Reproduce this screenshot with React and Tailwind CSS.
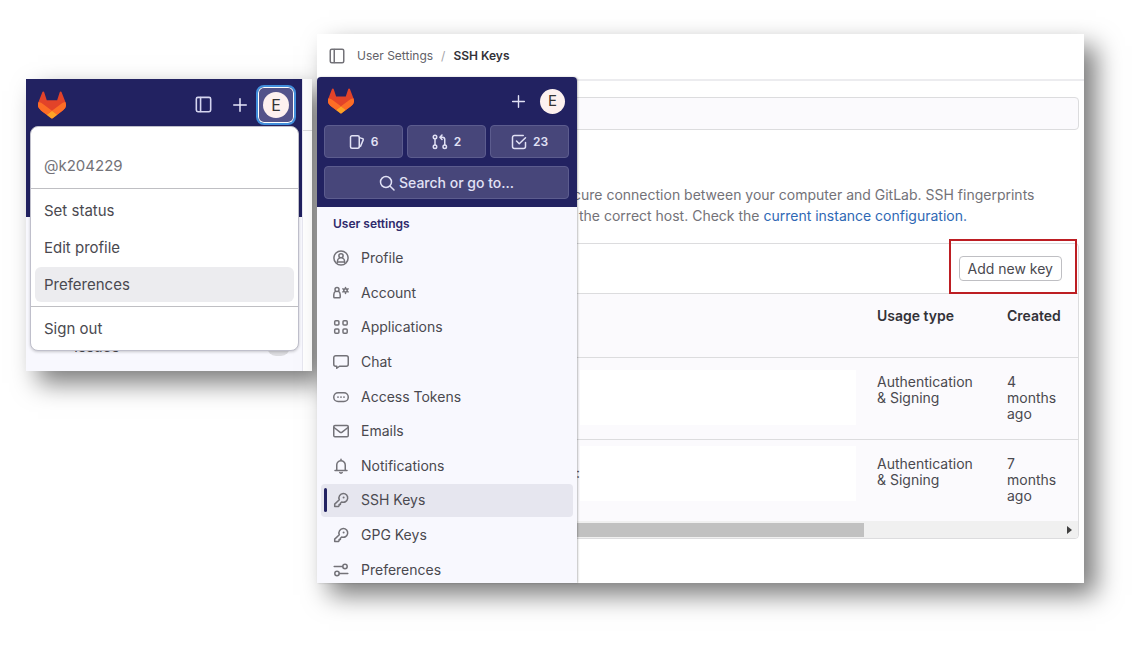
import clsx from 'clsx';

const Icon = ({ children, className }) => (
  <svg
    viewBox="0 0 16 16"
    fill="none"
    stroke="currentColor"
    strokeWidth="1.5"
    strokeLinecap="round"
    strokeLinejoin="round"
    aria-hidden="true"
    className={clsx('shrink-0', className)}
  >
    {children}
  </svg>
);

const icons = {
  sidebar: (
    <>
      <rect x="1.25" y="1.25" width="13.5" height="13.5" rx="1.5" />
      <path d="M5.25 1.5v13" />
    </>
  ),
  plus: <path d="M8 1.75v12.5M1.75 8h12.5" />,
  issues: (
    <>
      <rect x="1.5" y="1.75" width="8.75" height="12.5" rx="1.5" />
      <path d="M10.5 3.6l3 1a1 1 0 0 1 .7 1.3l-2.6 6.2-1.3.9" />
    </>
  ),
  mergeRequest: (
    <>
      <circle cx="3" cy="12.75" r="1.75" />
      <circle cx="3" cy="3" r="1.75" />
      <circle cx="12.75" cy="12.75" r="1.75" />
      <path d="M3 5v5.75M12.75 10.75V5.5a2.25 2.25 0 0 0-2.25-2.25H8.25M10 1L7.9 3.25 10 5.5" />
    </>
  ),
  todo: (
    <>
      <path d="M14.5 8.5v4a2 2 0 0 1-2 2h-9a2 2 0 0 1-2-2v-9a2 2 0 0 1 2-2h8.75" />
      <path d="M5.5 7l2.75 2.75 6.25-6" />
    </>
  ),
  search: (
    <>
      <circle cx="7" cy="7" r="5.5" />
      <path d="M11.2 11.2L15 15" />
    </>
  ),
  profile: (
    <>
      <circle cx="8" cy="8" r="7.1" />
      <circle cx="8" cy="5.75" r="2.1" />
      <path d="M4.4 12.75v-1.6c0-1.6 1-2.7 2.3-3.3M9.3 7.85c1.3.6 2.3 1.7 2.3 3.3v1.6M4.6 12.1h6.8" />
    </>
  ),
  account: (
    <>
      <circle cx="4" cy="4.6" r="2" />
      <path d="M2.4 6.4C1.2 7.2.8 8.4.8 9.8v2.1c0 .5.3.8.8.8h4.8c.5 0 .8-.3.8-.8V9.8c0-1.4-.4-2.6-1.6-3.4" />
      <circle cx="12.5" cy="5.4" r="1.7" />
      <path d="M12.5 2.4v1M12.5 7.4v1M9.9 3.9l.9.5M14.2 6.4l.9.5M9.9 6.9l.9-.5M14.2 4.4l.9-.5" />
    </>
  ),
  applications: (
    <>
      <rect x="1.7" y="1.7" width="4.2" height="4.2" rx="1" />
      <rect x="10" y="1.7" width="4.2" height="4.2" rx="1" />
      <rect x="1.7" y="10" width="4.2" height="4.2" rx="1" />
      <rect x="10" y="10" width="4.2" height="4.2" rx="1" />
    </>
  ),
  chat: (
    <path d="M2.75 1.75h10.5a2 2 0 0 1 2 2v6.5a2 2 0 0 1-2 2H6.5l-2.75 2v-2h-1a2 2 0 0 1-2-2v-6.5a2 2 0 0 1 2-2z" />
  ),
  token: (
    <>
      <rect x=".75" y="3.75" width="14.5" height="8.75" rx="4.3" />
      <path d="M5 8.1v0M8 8.1v0M11 8.1v0" strokeWidth="1.8" />
    </>
  ),
  mail: (
    <>
      <rect x=".75" y="2.5" width="14.5" height="11.25" rx="1.25" />
      <path d="M1 4.5l5.9 4.6a1.8 1.8 0 0 0 2.2 0L15 4.5" />
    </>
  ),
  bell: (
    <>
      <path d="M3.75 12V7a4.25 4.25 0 0 1 8.5 0v5M2 12.5h12M8 1.3v1.2" />
      <path d="M6.8 14.6c.6.7 1.8.7 2.4 0" />
    </>
  ),
  key: (
    <>
      <path d="M10.2 1.5a4.4 4.4 0 1 1-1.5 8.5L7.4 11.2v1.3H6.1v1.3l-.7.8H1.7v-2.5l4.6-4.4a4.4 4.4 0 0 1 3.9-6.2z" />
      <path d="M10.6 5.4v0" strokeWidth="2" />
    </>
  ),
  preferences: (
    <>
      <path d="M1.2 4.5h8.4M6.4 11.5h8.4" />
      <circle cx="12" cy="4.5" r="2.2" />
      <circle cx="4" cy="11.5" r="2.2" />
    </>
  ),
};

const Logo = ({ className }) => (
  <svg viewBox="0 0 25 24" aria-hidden="true" className={className}>
    <path
      fill="#E24329"
      d="m24.507 9.5-.034-.09L21.082.562a.896.896 0 0 0-1.694.091l-2.29 7.01H7.825L5.535.653a.898.898 0 0 0-1.694-.09L.451 9.411.416 9.5a6.297 6.297 0 0 0 2.09 7.278l.012.01.03.022 5.16 3.867 2.56 1.935 1.554 1.176a1.051 1.051 0 0 0 1.268 0l1.555-1.176 2.56-1.935 5.197-3.89.014-.01A6.297 6.297 0 0 0 24.507 9.5Z"
    />
    <path
      fill="#FC6D26"
      d="m24.507 9.5-.034-.09a11.44 11.44 0 0 0-4.56 2.051l-7.447 5.632 4.742 3.584 5.197-3.89.014-.01A6.297 6.297 0 0 0 24.507 9.5Z"
    />
    <path
      fill="#FCA326"
      d="m7.707 20.677 2.56 1.935 1.555 1.176a1.051 1.051 0 0 0 1.268 0l1.555-1.176 2.56-1.935-4.743-3.584-4.755 3.584Z"
    />
    <path
      fill="#FC6D26"
      d="M5.01 11.461a11.43 11.43 0 0 0-4.56-2.05L.416 9.5a6.297 6.297 0 0 0 2.09 7.278l.012.01.03.022 5.16 3.867 4.745-3.584-7.444-5.632Z"
    />
  </svg>
);

const navItems = [
  { label: 'Profile', icon: icons.profile },
  { label: 'Account', icon: icons.account },
  { label: 'Applications', icon: icons.applications },
  { label: 'Chat', icon: icons.chat },
  { label: 'Access Tokens', icon: icons.token },
  { label: 'Emails', icon: icons.mail },
  { label: 'Notifications', icon: icons.bell },
  { label: 'SSH Keys', icon: icons.key, active: true },
  { label: 'GPG Keys', icon: icons.key },
  { label: 'Preferences', icon: icons.preferences },
];

const counters = [
  { name: 'Issues', value: 6, icon: icons.issues },
  { name: 'Merge requests', value: 2, icon: icons.mergeRequest },
  { name: 'To-do items', value: 23, icon: icons.todo },
];

const menuItems = ['Set status', 'Edit profile', 'Preferences'];

const MenuItem = ({ label, active }) => (
  <li className="flex h-[37px] items-center px-1">
    <button
      type="button"
      className={clsx(
        'h-[35px] w-full rounded-md px-[9px] text-left',
        active && 'bg-[#ececef]'
      )}
    >
      {label}
    </button>
  </li>
);

const UserMenuPanel = () => (
  <section className="relative mt-[45px] flex w-[286px] shrink-0 bg-white text-[15px] shadow-[12px_12px_24px_rgba(0,0,0,0.52)]">
    <div className="flex-1 border-r border-[#e7e7f0] bg-[#f8f8fe]">
      <div className="h-[138px] bg-[#222261]">
        <div className="flex h-[51px] items-center pr-1.5 pl-3">
          <Logo className="size-7" />
          <button type="button" aria-label="Collapse sidebar" className="ml-auto text-[#d5d5f0]">
            <Icon className="size-[17px]">{icons.sidebar}</Icon>
          </button>
          <button type="button" aria-label="Create new" className="ml-5 text-[#e6e6fa]">
            <Icon className="size-4">{icons.plus}</Icon>
          </button>
          <button
            type="button"
            aria-label="User menu"
            className="ml-2 flex size-10 items-center justify-center rounded-lg border-2 border-[#428fdc] bg-[#53538a] ring-1 ring-white ring-inset"
          >
            <span className="flex size-[26px] items-center justify-center rounded-full bg-[#fdf1ef] text-base text-[#333]">
              E
            </span>
          </button>
        </div>
      </div>
      <div className="flex h-[154px] items-end justify-between pr-3 pb-[15px] pl-12">
        <span className="h-[18px] leading-[18px]">Issues</span>
        <span className="h-[18px] rounded-full bg-[#dcdce0] px-2 text-xs leading-[18px]">6</span>
      </div>
    </div>
    {/* Strip of the page next to the sidebar */}
    <div className="mt-[51px] w-[9px] border-t border-[#dcdcde]" />

    {/* Dropdown */}
    <div className="absolute top-[47px] left-1 w-[269px] rounded-lg border border-[#bfbfcb] bg-white shadow-[0_1px_3px_rgba(0,0,0,0.2)]">
      <p className="px-[13px] pt-[29px] pb-3 text-[#737278]">@k204229</p>
      <ul className="border-y border-[#bfbfc3] py-[3px]">
        {menuItems.map((label) => (
          <MenuItem key={label} label={label} active={label === 'Preferences'} />
        ))}
      </ul>
      <ul className="py-[3px]">
        <MenuItem label="Sign out" />
      </ul>
    </div>
  </section>
);

const Sidebar = () => (
  <aside className="z-10 w-[260px] shrink-0 overflow-hidden rounded-t bg-[#f8f8fe] shadow-[1px_0_2px_rgba(0,0,0,0.25)]">
    <div className="bg-[#222261] pr-2 pb-2 pl-[7px] text-[#e1e1f5]">
      <div className="flex h-12 items-center px-1">
        <Logo className="size-[26px]" />
        <button type="button" aria-label="Create new" className="ml-auto">
          <Icon className="size-[15px]">{icons.plus}</Icon>
        </button>
        <button
          type="button"
          aria-label="User menu"
          className="ml-3.5 flex size-[25px] items-center justify-center rounded-full bg-[#fdf1ef] text-[15px] text-[#333]"
        >
          E
        </button>
      </div>
      <div className="grid grid-cols-3 gap-1">
        {counters.map(({ name, value, icon }) => (
          <button
            key={name}
            type="button"
            aria-label={`${name} ${value}`}
            className="flex h-[33px] items-center justify-center gap-1.5 rounded border border-[#5c5c8e] bg-[#47467a] text-xs font-semibold"
          >
            <Icon className="size-4">{icon}</Icon>
            {value}
          </button>
        ))}
      </div>
      <button
        type="button"
        className="mt-2 flex h-[33px] w-full items-center justify-center gap-1 rounded border border-[#5c5c8e] bg-[#47467a] font-medium"
      >
        <Icon className="size-4">{icons.search}</Icon>
        Search or go to...
      </button>
    </div>

    <h2 className="flex h-[34px] items-center px-4 text-xs font-semibold text-[#2f2a6b]">
      User settings
    </h2>
    <ul className="-mb-1 grid h-[346px] grid-rows-10">
      {navItems.map(({ label, icon, active }) => (
        <li key={label} className="flex items-center px-1">
          <a
            href="#"
            className={clsx(
              'flex h-[33px] w-full items-center rounded pl-[3px]',
              active && 'bg-[#e6e6ef]'
            )}
          >
            <span className={clsx('mr-1.5 h-6 w-[3px] rounded-full', active && 'bg-[#222261]')} />
            <Icon className="mr-3 size-4 text-[#737278]">{icon}</Icon>
            {label}
          </a>
        </li>
      ))}
    </ul>
  </aside>
);

const KeysTable = () => (
  <table className="w-full table-fixed bg-[#fbfafd] text-left">
    <colgroup>
      <col />
      <col className="w-[130px]" />
      <col className="w-[71px]" />
    </colgroup>
    <thead>
      <tr className="h-[63px] border-b border-[#dcdcde] align-top text-[#333238]">
        <th aria-label="Key" />
        <th className="pt-3 font-semibold">Usage type</th>
        <th className="pt-3 font-semibold">Created</th>
      </tr>
    </thead>
    <tbody className="align-top leading-4">
      <tr className="h-[82px] border-b border-[#dcdcde]">
        <td className="pt-3 pr-[21px] pl-1.5">
          <div className="h-[55px] bg-white" />
        </td>
        <td className="pt-4 pr-6">Authentication &amp; Signing</td>
        <td className="pt-4 pr-4">4 months ago</td>
      </tr>
      <tr className="h-[82px]">
        <td className="pt-1.5 pr-[21px]">
          <div className="flex items-center">
            <span className="w-1.5 text-right">:</span>
            <div className="h-[55px] flex-1 bg-white" />
          </div>
        </td>
        <td className="pt-4 pr-6">Authentication &amp; Signing</td>
        <td className="pt-4 pr-4">7 months ago</td>
      </tr>
    </tbody>
  </table>
);

const SshKeysPanel = () => (
  <section className="relative min-w-0 flex-1 bg-white shadow-[12px_12px_24px_rgba(0,0,0,0.52)]">
    <header className="flex h-[43px] items-center px-3 text-xs">
      <button type="button" aria-label="Expand sidebar" className="text-[#737278]">
        <Icon className="size-4">{icons.sidebar}</Icon>
      </button>
      <nav aria-label="Breadcrumb" className="ml-3 flex items-center gap-2">
        <a href="#" className="text-[#626168]">User Settings</a>
        <span className="text-[#a4a3a8]">/</span>
        <a href="#" className="font-semibold text-[#333238]">SSH Keys</a>
      </nav>
    </header>

    <div className="flex">
      <Sidebar />
      <main className="mt-0.5 -ml-1 min-w-0 flex-1 border-t-2 border-[#ececef] pr-[5px] pb-11">
        <input
          type="search"
          aria-label="Search settings"
          className="mt-4 block h-[33px] w-full rounded border border-[#dcdcde] bg-[#fbfafd] px-3"
        />
        <p className="mt-[54px] leading-[21px] text-[#737278]">
          <span className="block">
            cure connection between your computer and GitLab. SSH fingerprints
          </span>
          <span className="block pl-1.5">
            the correct host. Check the{' '}
            <a href="#" className="text-[#2f68b4]">current instance configuration.</a>
          </span>
        </p>

        <div className="mt-[17px] rounded border border-[#dcdcde]">
          <div className="flex h-[50px] items-center justify-end border-b border-[#dcdcde] pr-4">
            <div className="relative">
              <button
                type="button"
                className="block h-[25px] rounded border border-[#bfbfc3] px-2 leading-[23px]"
              >
                Add new key
              </button>
              {/* Highlight around the button */}
              <div className="pointer-events-none absolute -top-[17px] -right-[15px] -bottom-[13px] -left-2.5 border-2 border-[#bd1e23]" />
            </div>
          </div>
          <KeysTable />
          {/* Horizontal scrollbar */}
          <div className="flex h-[17px] items-center justify-between rounded-b bg-[#f0f0f0] pr-1.5">
            <div className="h-3.5 w-[290px] bg-[#c1c1c1]" />
            <svg viewBox="0 0 5 8" className="h-2 w-[5px]" aria-hidden="true">
              <path d="M0 0l5 4-5 4z" fill="#404040" />
            </svg>
          </div>
        </div>
      </main>
    </div>
  </section>
);

const App = () => (
  <div className="flex min-h-screen items-start gap-[5px] bg-white pt-[34px] pr-12 pb-16 pl-[26px] font-['Inter',sans-serif] text-sm leading-5 text-[#4a494f]">
    <UserMenuPanel />
    <SshKeysPanel />
  </div>
);

export default App;
